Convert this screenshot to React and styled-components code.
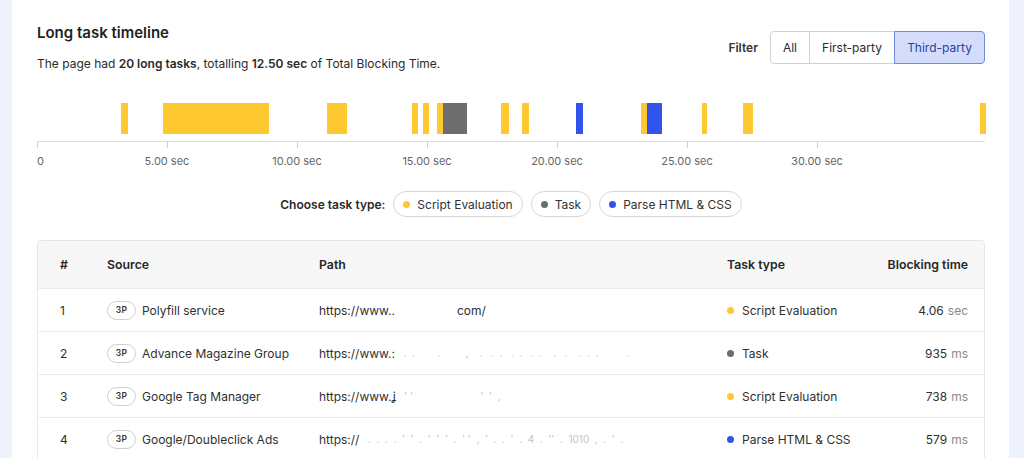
import React from "react";
import styled, { createGlobalStyle } from "styled-components";

const COLORS = {
  script: "#fec930",
  task: "#6d6d6d",
  parse: "#3154ec",
};

const PX_PER_SEC = 26;

// [start sec, duration sec, type]
const TASKS = [
  [3.23, 0.27, "script"],
  [4.85, 4.07, "script"],
  [11.15, 0.77, "script"],
  [14.42, 0.23, "script"],
  [14.85, 0.23, "script"],
  [15.38, 0.23, "script"],
  [15.61, 0.92, "task"],
  [17.85, 0.31, "script"],
  [18.65, 0.27, "script"],
  [20.73, 0.27, "parse"],
  [23.23, 0.23, "script"],
  [23.46, 0.58, "parse"],
  [25.58, 0.19, "script"],
  [27.15, 0.38, "script"],
  [36.27, 0.23, "script"],
];

const TICKS = [0, 5, 10, 15, 20, 25, 30];

const ROWS = [
  {
    n: 1,
    source: "Polyfill service",
    path: "https://www..",
    hidden: "",
    tail: "com/",
    type: "script",
    value: "4.06",
    unit: "sec",
  },
  {
    n: 2,
    source: "Advance Magazine Group",
    path: "https://www.:",
    hidden: ".  .        .         ,    .   .  .   .  .   .  .    .   .    .  .  .          .",
    type: "task",
    value: "935",
    unit: "ms",
  },
  {
    n: 3,
    source: "Google Tag Manager",
    path: "https://www.ʝ",
    hidden: "' '                        '  '  ,",
    type: "script",
    value: "738",
    unit: "ms",
  },
  {
    n: 4,
    source: "Google/Doubleclick Ads",
    path: "https://",
    hidden: ".  .  .  .  '  '  .  '  '  '  .  ' '  ,  '  .  .  '  .  4  .  ''  .  1010  ,  .  '  .",
    type: "parse",
    value: "579",
    unit: "ms",
  },
];

const TYPE_LABELS = {
  script: "Script Evaluation",
  task: "Task",
  parse: "Parse HTML & CSS",
};

const GlobalStyle = createGlobalStyle`
  html, body {
    margin: 0;
    padding: 0;
    background: #eef2fd;
  }
  body {
    font-family: Inter, "Noto Sans", "Liberation Sans", sans-serif;
    color: #222;
    -webkit-font-smoothing: antialiased;
  }
`;

const Page = styled.div`
  margin: 0 15px 0 12px;
  height: 458px;
  overflow: hidden;
  background: #fff;
  padding: 23px 24px 0 25px;
  box-sizing: border-box;
`;

const HeaderRow = styled.div`
  display: flex;
  justify-content: space-between;
  align-items: center;
`;

const Title = styled.h2`
  margin: 0;
  font-size: 15px;
  line-height: 20px;
  font-weight: 600;
  color: #1f1f1f;
`;

const Subtitle = styled.p`
  margin: 12px 0 0;
  font-size: 12px;
  line-height: 18px;
  color: #2a2a2a;

  strong {
    font-weight: 600;
  }
`;

const FilterWrap = styled.div`
  display: flex;
  align-items: center;
  gap: 12px;
  margin-top: -2px;
`;

const FilterLabel = styled.span`
  font-size: 12px;
  font-weight: 600;
  color: #333;
`;

const ButtonGroup = styled.div`
  display: flex;
`;

const FilterButton = styled.button`
  height: 33px;
  padding: 0 12px;
  min-width: ${(p) => p.$min || 0}px;
  font-family: inherit;
  font-size: 12px;
  color: ${(p) => (p.$active ? "#2b3ea6" : "#2b2b2b")};
  background: ${(p) => (p.$active ? "#d3ddfb" : "#fff")};
  border: 1px solid ${(p) => (p.$active ? "#6f88e0" : "#d2d2d2")};
  margin-left: -1px;
  position: relative;
  z-index: ${(p) => (p.$active ? 1 : 0)};
  cursor: pointer;

  &:first-child {
    border-radius: 4px 0 0 4px;
    margin-left: 0;
  }
  &:last-child {
    border-radius: 0 4px 4px 0;
  }
`;

const Timeline = styled.div`
  margin-top: 30px;
`;

const Track = styled.div`
  position: relative;
  height: 31px;
`;

const Bar = styled.div`
  position: absolute;
  top: 0;
  bottom: 0;
  background: ${(p) => COLORS[p.$type]};
`;

const Axis = styled.div`
  position: relative;
  margin-top: 7px;
  height: 30px;
  border-top: 1px solid #dedede;
`;

const Tick = styled.div`
  position: absolute;
  top: 0;
  width: 1px;
  height: 6px;
  background: #cfcfcf;
`;

const TickLabel = styled.span`
  position: absolute;
  top: 12px;
  font-size: 11px;
  line-height: 14px;
  color: #666;
  white-space: nowrap;
  transform: ${(p) => (p.$first ? "none" : "translateX(-50%)")};
`;

const ChooserRow = styled.div`
  margin-top: 19px;
  display: flex;
  justify-content: center;
  align-items: center;
  gap: 8px;
`;

const ChooserLabel = styled.span`
  font-size: 12px;
  font-weight: 600;
  color: #2a2a2a;
`;

const Pill = styled.button`
  display: inline-flex;
  align-items: center;
  gap: 7px;
  height: 26px;
  padding: 0 9px;
  border: 1px solid #d8d8d8;
  border-radius: 13px;
  background: #fff;
  font-family: inherit;
  font-size: 12px;
  color: #333;
  cursor: pointer;
`;

const Dot = styled.span`
  width: 7px;
  height: 7px;
  border-radius: 50%;
  flex: none;
  background: ${(p) => COLORS[p.$type]};
`;

const Table = styled.div`
  margin-top: 23px;
  border: 1px solid #e6e6e6;
  border-radius: 4px;
  overflow: hidden;
`;

const Row = styled.div`
  display: grid;
  grid-template-columns: 69px 212px 408px 1fr auto;
  align-items: center;
  height: ${(p) => (p.$head ? "47px" : "42px")};
  background: ${(p) => (p.$head ? "#f7f7f7" : "#fff")};
  border-top: ${(p) => (p.$head ? "none" : "1px solid #ececec")};
  font-size: ${(p) => (p.$head ? "12.3px" : "12px")};
  font-weight: ${(p) => (p.$head ? 600 : 400)};
  color: ${(p) => (p.$head ? "#262626" : "#303030")};
`;

const Cell = styled.div`
  display: flex;
  align-items: center;
  gap: ${(p) => (p.$gap ? "6px" : "0")};
  padding-left: ${(p) => (p.$first ? "22px" : "0")};
  padding-right: ${(p) => (p.$right ? "16px" : "0")};
  justify-content: ${(p) => (p.$right ? "flex-end" : "flex-start")};
  white-space: nowrap;
  overflow: hidden;
`;

const Badge = styled.span`
  display: inline-flex;
  align-items: center;
  justify-content: center;
  width: 29px;
  height: 19px;
  box-sizing: border-box;
  border: 1px solid #cfcfcf;
  border-radius: 10px;
  font-size: 8.5px;
  font-weight: 600;
  color: #333;
  letter-spacing: 0.3px;
`;

const Redacted = styled.span`
  color: #c4c4c4;
  font-size: 10px;
  white-space: pre;
`;

const Tail = styled.span`
  margin-left: 62px;
`;

const TypeText = styled.span`
  margin-left: 2px;
`;

const Unit = styled.span`
  color: #8a8a8a;
  margin-left: 4px;
`;

function TimelineChart() {
  return (
    <Timeline>
      <Track>
        {TASKS.map(([start, dur, type], i) => (
          <Bar
            key={i}
            $type={type}
            style={{ left: start * PX_PER_SEC, width: dur * PX_PER_SEC }}
          />
        ))}
      </Track>
      <Axis>
        {TICKS.map((t) => (
          <React.Fragment key={t}>
            <Tick style={{ left: t * PX_PER_SEC }} />
            <TickLabel $first={t === 0} style={{ left: t * PX_PER_SEC }}>
              {t === 0 ? "0" : `${t.toFixed(2)} sec`}
            </TickLabel>
          </React.Fragment>
        ))}
      </Axis>
    </Timeline>
  );
}

export default function App() {
  return (
    <>
      <GlobalStyle />
      <Page>
        <HeaderRow>
          <div>
            <Title>Long task timeline</Title>
            <Subtitle>
              The page had <strong>20 long tasks</strong>, totalling{" "}
              <strong>12.50 sec</strong> of Total Blocking Time.
            </Subtitle>
          </div>
          <FilterWrap>
            <FilterLabel>Filter</FilterLabel>
            <ButtonGroup>
              <FilterButton $min={38}>All</FilterButton>
              <FilterButton $min={86}>First-party</FilterButton>
              <FilterButton $min={91} $active>
                Third-party
              </FilterButton>
            </ButtonGroup>
          </FilterWrap>
        </HeaderRow>

        <TimelineChart />

        <ChooserRow>
          <ChooserLabel>Choose task type:</ChooserLabel>
          {Object.keys(TYPE_LABELS).map((k) => (
            <Pill key={k}>
              <Dot $type={k} />
              {TYPE_LABELS[k]}
            </Pill>
          ))}
        </ChooserRow>

        <Table>
          <Row $head>
            <Cell $first>#</Cell>
            <Cell>Source</Cell>
            <Cell>Path</Cell>
            <Cell>Task type</Cell>
            <Cell $right>Blocking time</Cell>
          </Row>
          {ROWS.map((r) => (
            <Row key={r.n}>
              <Cell $first>{r.n}</Cell>
              <Cell $gap>
                <Badge>3P</Badge>
                {r.source}
              </Cell>
              <Cell>
                {r.path}
                {r.hidden && <Redacted>{"   " + r.hidden}</Redacted>}
                {r.tail && <Tail>{r.tail}</Tail>}
              </Cell>
              <Cell $gap>
                <Dot $type={r.type} />
                <TypeText>{TYPE_LABELS[r.type]}</TypeText>
              </Cell>
              <Cell $right>
                {r.value}
                <Unit>{r.unit}</Unit>
              </Cell>
            </Row>
          ))}
        </Table>
      </Page>
    </>
  );
}
